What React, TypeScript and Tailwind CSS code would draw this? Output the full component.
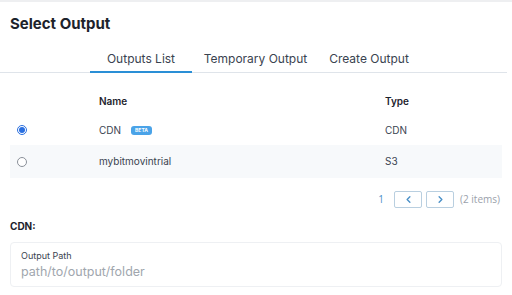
import { ChevronLeft, ChevronRight } from "lucide-react";

const rows = [
  { name: "CDN", type: "CDN", beta: true, selected: true },
  { name: "mybitmovintrial", type: "S3", beta: false, selected: false },
];

export default function App() {
  return (
    <div
      className="w-[512px] h-[295px] overflow-hidden bg-white border-t-2 border-[#eeeff1] text-[#2b3340]"
      style={{ fontFamily: "Inter, 'Noto Sans', sans-serif" }}
    >
      <h1 className="px-[10px] pt-[12px] text-[15px] font-bold leading-[20px] text-[#1d232c]">Select Output</h1>

      {/* Tabs */}
      <div className="mt-[17px] mr-[5px] flex border-b border-[#dfe4ea] pl-[90px] text-[12px] leading-[16px] text-[#3a4350]">
        <div className="w-[102px] border-b-2 border-[#2a8fd6] -mb-px pb-[4px] text-center">Outputs List</div>
        <div className="w-[127px] pb-[4px] text-center">Temporary Output</div>
        <div className="w-[100px] pb-[4px] text-center">Create Output</div>
      </div>

      {/* Table */}
      <div className="mx-[10px] mt-[20px] text-[10px]">
        <div className="flex h-[16px] items-center font-semibold text-[#1d232c]">
          <div className="w-[89px]" />
          <div className="flex-1">Name</div>
          <div className="w-[117px]">Type</div>
        </div>
        {rows.map((r) => (
          <div
            key={r.name}
            className={`flex items-center ${r.selected ? "h-[30px] mt-[6px]" : "h-[33px] bg-[#f7f9fb]"}`}
          >
            <div className="w-[89px] pl-[7px]">
              {r.selected ? (
                <div className="flex h-[10px] w-[10px] items-center justify-center rounded-full border border-[#2a6fe0]">
                  <div className="h-[6px] w-[6px] rounded-full bg-[#2a6fe0]" />
                </div>
              ) : (
                <div className="h-[10px] w-[10px] rounded-full border border-[#8a9099] bg-white" />
              )}
            </div>
            <div className="flex flex-1 items-center gap-[10px] text-[#3a4350]">
              {r.name}
              {r.beta && (
                <span className="rounded-[3px] bg-[#4aa3e8] px-[4px] text-[5px] font-bold leading-[9px] text-white">
                  BETA
                </span>
              )}
            </div>
            <div className="w-[117px] text-[#3a4350]">{r.type}</div>
          </div>
        ))}
      </div>

      {/* Pagination */}
      <div
        className="mt-[13px] mr-[12px] flex items-center justify-end gap-[4px] text-[10px] text-[#9aa1ab]"
        style={{ fontFamily: "'Open Sans', sans-serif" }}
      >
        <span className="mr-[6px] text-[#4a90c8]">1</span>
        <button className="flex h-[17px] w-[28px] items-center justify-center rounded-[2px] border border-[#b9cfe0] text-[#4a90c8]">
          <ChevronLeft size={11} strokeWidth={3} />
        </button>
        <button className="flex h-[17px] w-[28px] items-center justify-center rounded-[2px] border border-[#b9cfe0] text-[#4a90c8]">
          <ChevronRight size={11} strokeWidth={3} />
        </button>
        <span className="ml-[2px]">(2 items)</span>
      </div>

      {/* CDN settings */}
      <div className="px-[10px] pt-[12px]">
        <div className="text-[10px] leading-[12px] font-bold text-[#1d232c]">CDN:</div>
        <div className="mt-[10px] h-[45px] rounded-[4px] border border-[#eef0f3] px-[10px] pt-[7px]">
          <div className="text-[9px] leading-[11px] text-[#3a4350]">Output Path</div>
          <div className="mt-[3px] text-[12.5px] leading-[16px] text-[#a0a6ae]">path/to/output/folder</div>
        </div>
      </div>
    </div>
  );
}
